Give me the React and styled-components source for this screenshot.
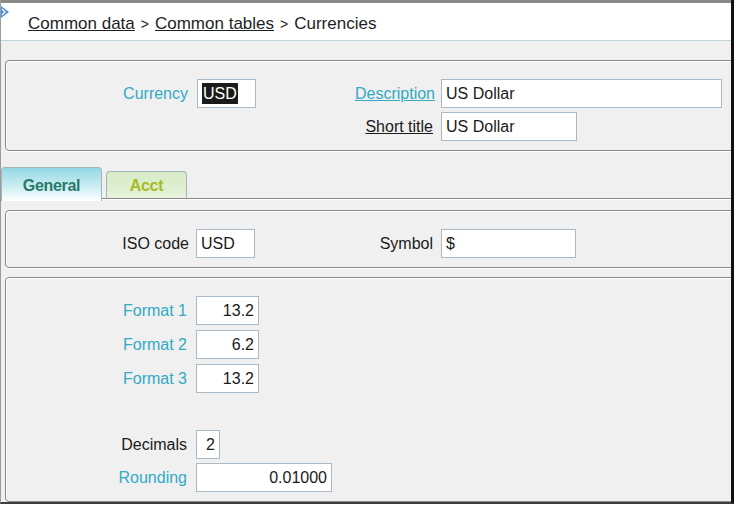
import React from 'react';
import styled, { createGlobalStyle } from 'styled-components';

const GlobalStyle = createGlobalStyle`
  html, body {
    margin: 0;
    padding: 0;
    background: #ffffff;
  }
  body {
    font-family: "Liberation Sans", Arial, sans-serif;
  }
`;

const Window = styled.div`
  width: 730px;
  height: 502px;
  border-left: 1px solid #9c9c9c;
  border-right: 3px solid #111111;
  border-bottom: 2px solid #3c3c3c;
  background: #f0f0f0;
  overflow: hidden;
  display: flex;
  flex-direction: column;
`;

const Header = styled.div`
  height: 41px;
  box-sizing: border-box;
  border-top: 3px solid #8a8a8a;
  border-bottom: 1px solid #c4d4dc;
  background: #ffffff;
  display: flex;
  align-items: center;
  padding-top: 4px;
  position: relative;
`;

const HeaderIcon = styled.svg`
  position: absolute;
  left: 0;
  top: 3px;
`;

const Crumbs = styled.div`
  padding-left: 27px;
  font-size: 17px;
  color: #1e1e1e;
  white-space: nowrap;
`;

const Crumb = styled.span`
  text-decoration: ${(p) => (p.$link ? 'underline' : 'none')};
`;

const Sep = styled.span`
  font-size: 14px;
  margin: 0 6px;
`;

const Panel = styled.div`
  margin: ${(p) => p.$top}px -6px 0 4px;
  padding: 18px 0 ${(p) => p.$bottom}px 0;
  border: 1px solid #8a8a8a;
  border-radius: 4px;
  box-shadow: inset 1px 1px 0 #ffffff, 0 1px 0 #ffffff;
  display: flex;
  flex-direction: column;
  gap: ${(p) => p.$gap || 4}px;
  flex: ${(p) => (p.$grow ? 1 : 'none')};
`;

const Row = styled.div`
  display: flex;
  align-items: center;
  margin-top: ${(p) => p.$mt || 0}px;
`;

const Label = styled.div`
  width: ${(p) => p.$w}px;
  padding-right: ${(p) => p.$pr}px;
  box-sizing: border-box;
  text-align: right;
  font-size: 16px;
  color: ${(p) => (p.$teal ? '#33a9c4' : '#1a1a1a')};
  text-decoration: ${(p) => (p.$under ? 'underline' : 'none')};
  white-space: nowrap;
`;

const Spacer = styled.div`
  width: ${(p) => p.$w}px;
`;

const Box = styled.div`
  width: ${(p) => p.$w}px;
  height: 29px;
  box-sizing: border-box;
  border: 1px solid #a9bac6;
  background: #ffffff;
  font-size: 16px;
  color: #1a1a1a;
  display: flex;
  align-items: center;
  justify-content: ${(p) => (p.$right ? 'flex-end' : 'flex-start')};
  padding: 0 4px 0 4px;
  white-space: nowrap;
`;

const Selected = styled.span`
  background: #1b1b1b;
  color: #ffffff;
  padding: 1px 1px 0 1px;
  line-height: 20px;
`;

const TabStrip = styled.div`
  margin-top: 16px;
  display: flex;
  align-items: flex-end;
  border-bottom: 1px solid #8a8a8a;
  box-shadow: 0 1px 0 #ffffff;
  height: 31px;
`;

const Tab = styled.div`
  position: relative;
  box-sizing: border-box;
  height: ${(p) => (p.$active ? 34 : 27)}px;
  width: ${(p) => p.$w}px;
  margin-left: ${(p) => p.$ml || 0}px;
  margin-bottom: ${(p) => (p.$active ? -3 : 0)}px;
  border: 1px solid #a4b4b8;
  border-bottom: none;
  border-radius: 4px 4px 0 0;
  background: ${(p) =>
    p.$active
      ? 'linear-gradient(to bottom, #94d8e4 0%, #c6ebf1 50%, #ffffff 100%)'
      : 'linear-gradient(to bottom, #d6ecc6 0%, #deefd0 60%, #e8f3de 100%)'};
  color: ${(p) => (p.$active ? '#267a68' : '#a8bb22')};
  font-weight: bold;
  font-size: 16px;
  letter-spacing: -0.3px;
  display: flex;
  align-items: center;
  justify-content: center;
  padding-top: 2px;
  z-index: 1;
`;

export default function App() {
  return (
    <>
      <GlobalStyle />
      <Window>
        <Header>
          <HeaderIcon width="9" height="12" viewBox="0 0 9 12">
            <path d="M0 0 L8 6 L0 12 Z" fill="#4a90d9" />
            <path d="M1 3 L4 6 L1 9" stroke="#ffffff" strokeWidth="1.2" fill="none" />
          </HeaderIcon>
          <Crumbs>
            <Crumb $link>Common data</Crumb>
            <Sep>&gt;</Sep>
            <Crumb $link>Common tables</Crumb>
            <Sep>&gt;</Sep>
            <Crumb>Currencies</Crumb>
          </Crumbs>
        </Header>

        <Panel $top={19} $bottom={9}>
          <Row>
            <Label $w={191} $pr={9} $teal>Currency</Label>
            <Box $w={59}>
              <Selected>USD</Selected>
            </Box>
            <Label $w={185} $pr={6} $teal $under>Description</Label>
            <Box $w={281}>US Dollar</Box>
          </Row>
          <Row>
            <Spacer $w={250} />
            <Label $w={185} $pr={8} $under>Short title</Label>
            <Box $w={136}>US Dollar</Box>
          </Row>
        </Panel>

        <TabStrip>
          <Tab $active $w={101}>General</Tab>
          <Tab $w={81} $ml={4}>Acct</Tab>
        </TabStrip>

        <Panel $top={11} $bottom={9}>
          <Row>
            <Label $w={190} $pr={7}>ISO code</Label>
            <Box $w={59}>USD</Box>
            <Label $w={186} $pr={8}>Symbol</Label>
            <Box $w={135}>$</Box>
          </Row>
        </Panel>

        <Panel $top={9} $bottom={9} $gap={5} $grow>
          <Row>
            <Label $w={190} $pr={9} $teal>Format 1</Label>
            <Box $w={63} $right>13.2</Box>
          </Row>
          <Row>
            <Label $w={190} $pr={9} $teal>Format 2</Label>
            <Box $w={63} $right>6.2</Box>
          </Row>
          <Row>
            <Label $w={190} $pr={9} $teal>Format 3</Label>
            <Box $w={63} $right>13.2</Box>
          </Row>
          <Row $mt={32}>
            <Label $w={190} $pr={9}>Decimals</Label>
            <Box $w={24} $right>2</Box>
          </Row>
          <Row $mt={-1}>
            <Label $w={190} $pr={9} $teal>Rounding</Label>
            <Box $w={136} $right>0.01000</Box>
          </Row>
        </Panel>
      </Window>
    </>
  );
}
